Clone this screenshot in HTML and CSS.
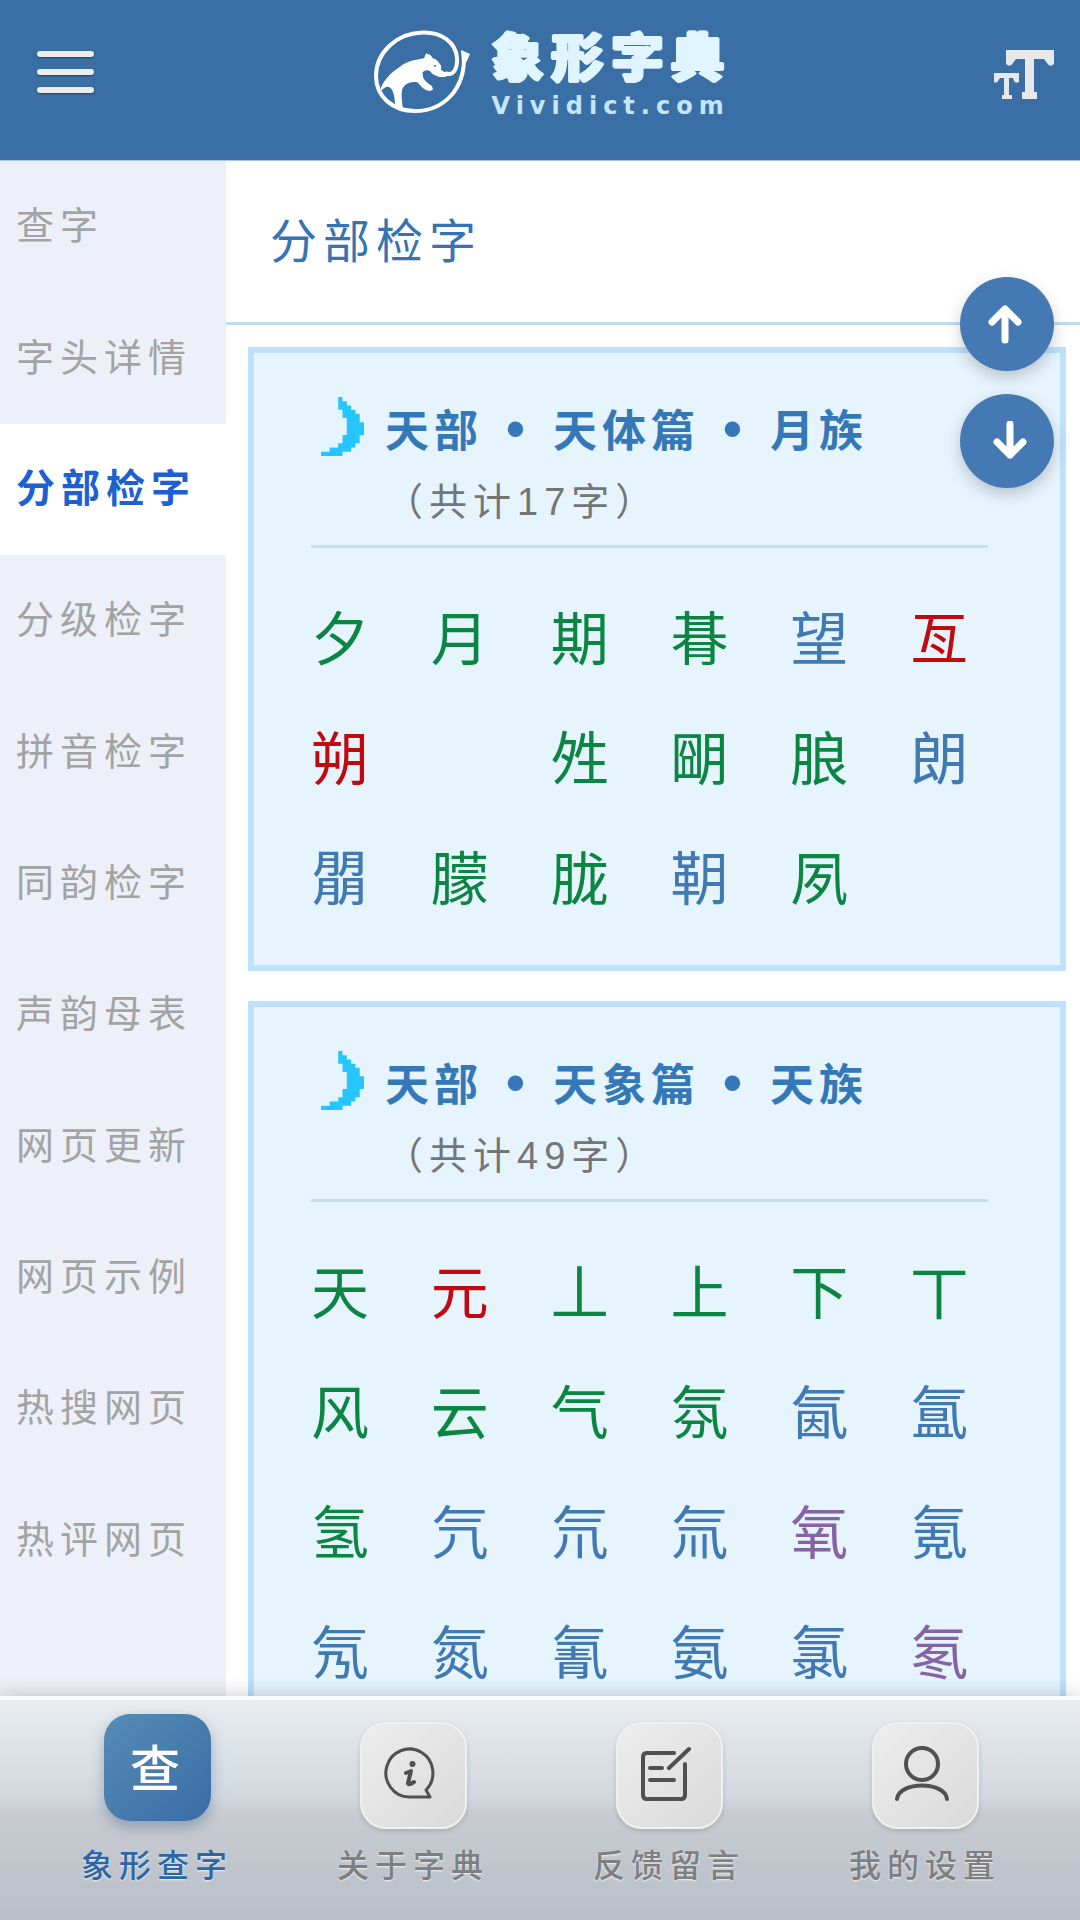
FILE: index.html
```html
<!DOCTYPE html>
<html lang="zh-CN">
<head>
    <meta charset="UTF-8">
    <meta name="viewport" content="width=device-width, initial-scale=1.0">
    <title>象形字典</title>
    <link rel="stylesheet" href="styles.css">
</head>
<body>
    <header class="header">
        <button class="menu-btn" type="button" aria-label="菜单">
            <span></span>
            <span></span>
            <span></span>
        </button>
        <a class="logo" href="#">
            <svg class="logo-icon" viewBox="0 0 98 84" aria-hidden="true">
                <path d="M72 43 C81 47 84.500 38 84 28 C83 12 68 2 50 2.500 C24 3 3 22 3 46 C3 67 20 81 42 81 C70 81 92 60 91 26" fill="none" stroke="#fff" stroke-width="4"/>
                <path d="M88 20 L97 24 L93 33 L89 33 Z" fill="#fff"/>
                <path d="M22 77 L30 79 C29 72 28 66 29 60 C31 54 37 51 44.400 52.300 L50 58.300 Q56 63 60 59.500 L59 56 Q52 52 50 47.300 L49.500 42.300 Q53 39 57 41 C60 46 69 49 75 45.700 L74 42.300 Q69 42 67.800 39 Q69 36 66.800 34 Q64 29 59.500 28 Q58 24 53 23.500 L51 28.300 C43 30 34 31 28 36 C17 43 9 52 7 61 L13 57 Q17 56 19.500 60.700 C22 66 22 72 22 77 Z" fill="#fff"/>
                <circle cx="62" cy="36" r="1" fill="#3a6fa6"/>
            </svg>
            <span class="logo-text">
                <span class="logo-name">象形字典</span>
                <span class="logo-site">Vividict.com</span>
            </span>
        </a>
        <button class="size-btn" type="button" aria-label="字体大小">
            <svg width="62" height="50" viewBox="0 0 62 50" fill="#e6e8ec" aria-hidden="true">
                <path d="M13 0 H61 V14 Q57 18 54 13 L51 9 H41 V42 H44 V49 H29 V42 H32 V9 H23 L20 13 Q17 18 13 14 Z"/>
                <path d="M1 23 H26 V32 Q23 34 21 31 L20 28 H16 V45 H19 V49 H9 V45 H11 V28 H7 L5 31 Q3 34 1 32 Z"/>
            </svg>
        </button>
    </header>

    <div class="content">
        <nav class="sidebar">
            <a href="#">查字</a>
            <a href="#">字头详情</a>
            <a href="#" class="active">分部检字</a>
            <a href="#">分级检字</a>
            <a href="#">拼音检字</a>
            <a href="#">同韵检字</a>
            <a href="#">声韵母表</a>
            <a href="#">网页更新</a>
            <a href="#">网页示例</a>
            <a href="#">热搜网页</a>
            <a href="#">热评网页</a>
        </nav>

        <main class="main">
            <h1 class="page-title">分部检字</h1>

            <section class="card">
                <div class="card-head">
                    <svg class="moon" width="43" height="59" viewBox="0 0 10 14" preserveAspectRatio="none" aria-hidden="true">
                        <path d="M4 0h1v1h1v1h1v1h1v1h1v2h1v3h-1v2h-1v1h-1v1h-2v1h-5v-1h2v-1h2v-1h1v-2h1v-4h-1v-2h-1v-3h-1z" fill="#27c5ff"/>
                    </svg>
                    <div>
                        <h2 class="card-title">天部<i class="dot">•</i>天体篇<i class="dot">•</i>月族</h2>
                        <p class="card-count">（共计17字）</p>
                    </div>
                </div>
                <div class="chars">
                    <a href="#" class="green">夕</a>
                    <a href="#" class="green">月</a>
                    <a href="#" class="green">期</a>
                    <a href="#" class="green">朞</a>
                    <a href="#">望</a>
                    <a href="#" class="red">亙</a>
                    <a href="#" class="red">朔</a>
                    <span></span>
                    <a href="#" class="green">夝</a>
                    <a href="#" class="green">朙</a>
                    <a href="#" class="green">朖</a>
                    <a href="#">朗</a>
                    <a href="#">朤</a>
                    <a href="#" class="green">朦</a>
                    <a href="#" class="green">胧</a>
                    <a href="#">䩗</a>
                    <a href="#" class="green">夙</a>
                </div>
            </section>

            <section class="card">
                <div class="card-head">
                    <svg class="moon" width="43" height="59" viewBox="0 0 10 14" preserveAspectRatio="none" aria-hidden="true">
                        <path d="M4 0h1v1h1v1h1v1h1v1h1v2h1v3h-1v2h-1v1h-1v1h-2v1h-5v-1h2v-1h2v-1h1v-2h1v-4h-1v-2h-1v-3h-1z" fill="#27c5ff"/>
                    </svg>
                    <div>
                        <h2 class="card-title">天部<i class="dot">•</i>天象篇<i class="dot">•</i>天族</h2>
                        <p class="card-count">（共计49字）</p>
                    </div>
                </div>
                <div class="chars">
                    <a href="#" class="green">天</a>
                    <a href="#" class="red">元</a>
                    <a href="#" class="green">丄</a>
                    <a href="#" class="green">上</a>
                    <a href="#" class="green">下</a>
                    <a href="#" class="green">丅</a>
                    <a href="#" class="green">风</a>
                    <a href="#" class="green">云</a>
                    <a href="#" class="green">气</a>
                    <a href="#" class="green">氛</a>
                    <a href="#">氤</a>
                    <a href="#">氲</a>
                    <a href="#" class="green">氢</a>
                    <a href="#">氕</a>
                    <a href="#">氘</a>
                    <a href="#">氚</a>
                    <a href="#" class="purple">氧</a>
                    <a href="#">氪</a>
                    <a href="#">氖</a>
                    <a href="#">氮</a>
                    <a href="#">氰</a>
                    <a href="#">氨</a>
                    <a href="#">氯</a>
                    <a href="#" class="purple">氡</a>
                </div>
            </section>
        </main>
    </div>

    <!-- 上下滚动按钮 -->
    <div class="scroll-btns">
        <button type="button" aria-label="向上">
            <svg width="40" height="40" viewBox="0 0 40 40" aria-hidden="true">
                <path d="M18 36V5M5 18L18 5L31 18"/>
            </svg>
        </button>
        <button type="button" aria-label="向下">
            <svg width="40" height="40" viewBox="0 0 40 40" aria-hidden="true">
                <path d="M23 3V34M10 21L23 34L36 21"/>
            </svg>
        </button>
    </div>

    <nav class="tabbar">
        <a href="#" class="tab active">
            <span class="tab-icon">查</span>
            <span class="tab-label">象形查字</span>
        </a>
        <a href="#" class="tab">
            <span class="tab-icon">
                <svg width="56" height="56" viewBox="0 0 56 56" aria-hidden="true">
                    <path d="M47 51H26A23.500 24 0 1 1 43 44Z" class="thin"/>
                    <circle cx="29.500" cy="18" r="3" class="fill"/>
                    <path d="M23 27L28 25L25 37Q25 40 31 36"/>
                </svg>
            </span>
            <span class="tab-label">关于字典</span>
        </a>
        <a href="#" class="tab">
            <span class="tab-icon">
                <svg width="56" height="56" viewBox="0 0 56 56" aria-hidden="true">
                    <path d="M35 7H8Q4 7 4 11V49Q4 53 8 53H42Q46 53 46 49V18M11 22H23M11 34H35M30 22L50 3"/>
                </svg>
            </span>
            <span class="tab-label">反馈留言</span>
        </a>
        <a href="#" class="tab">
            <span class="tab-icon">
                <svg width="56" height="56" viewBox="0 0 56 56" aria-hidden="true">
                    <circle cx="27" cy="18" r="16"/>
                    <path d="M2 53C4 35 50 35 52 53"/>
                </svg>
            </span>
            <span class="tab-label">我的设置</span>
        </a>
    </nav>
</body>
</html>
```
FILE: styles.css
```css
* {
    box-sizing: border-box;
}

body {
    margin: 0;
    height: 100vh;
    display: flex;
    flex-direction: column;
    overflow: hidden;
    background: #fff;
    font-family: "Liberation Sans", "Noto Sans CJK SC", sans-serif;
    letter-spacing: 6px;
}

a {
    text-decoration: none;
    color: inherit;
}

button {
    border: none;
    padding: 0;
    background: none;
    cursor: pointer;
}

/* 顶部 */
.header {
    flex: none;
    height: 161px;
    padding: 0 25px 16px 37px;
    display: flex;
    align-items: center;
    justify-content: space-between;
    background: #3a6fa6;
    border-bottom: 1px solid #a9c4e4;
}

.menu-btn {
    width: 57px;
    display: flex;
    flex-direction: column;
    gap: 12px;
}

.menu-btn span {
    height: 6px;
    border-radius: 3px;
    background: #eceded;
    box-shadow: 0 1px 2px rgba(0, 0, 0, 0.4);
}

.logo {
    display: flex;
    align-items: center;
    gap: 20px;
    margin-left: 18px;
}

.logo-icon {
    width: 98px;
    height: 84px;
}

.logo-text {
    display: flex;
    flex-direction: column;
    gap: 4px;
    padding-top: 8px;
}

.logo-name {
    font-size: 52px;
    line-height: 56px;
    font-weight: 900;
    letter-spacing: 8px;
    color: #e0f5ff;
    text-shadow: 2px 0 #e0f5ff, -2px 0 #e0f5ff, 0 1px #e0f5ff, 0 -1px #e0f5ff,
        1px 1px #e0f5ff, -1px 1px #e0f5ff, 1px -1px #e0f5ff, -1px -1px #e0f5ff;
}

.logo-site {
    font-family: "DejaVu Sans", sans-serif;
    font-size: 24px;
    line-height: 30px;
    font-weight: bold;
    letter-spacing: 6px;
    color: #c5e6ff;
}

.size-btn {
    padding-top: 5px;
}

.size-btn svg {
    display: block;
}

/* 中间内容 */
.content {
    flex: 1;
    min-height: 0;
    display: flex;
    overflow: hidden;
}

.sidebar {
    flex: none;
    width: 226px;
    padding-bottom: 90px;
    display: flex;
    flex-direction: column;
    background: #edf0f8;
}

.sidebar a {
    flex: 1;
    display: flex;
    align-items: center;
    padding: 0 0 8px 16px;
    font-size: 38px;
    color: #a3a3a3;
}

.sidebar a.active {
    background: #fff;
    color: #1d60d2;
    font-size: 39px;
    font-weight: bold;
}

.main {
    flex: 1;
    min-width: 0;
}

.page-title {
    margin: 0 0 22px;
    padding: 0 44px;
    font-size: 47px;
    line-height: 161px;
    font-weight: normal;
    color: #3673b3;
    border-bottom: 3px solid #bfdcee;
}

.card {
    margin: 0 14px 30px 22px;
    padding: 44px 60px 25px 57px;
    background: #e6f4fe;
    border: 6px solid #bde1fe;
}

.card-head {
    display: flex;
    gap: 21px;
    margin: 0 12px 32px 0;
    padding-left: 10px;
    border-bottom: 3px solid #c5dfef;
}

.moon {
    flex: none;
}

.card-title {
    margin: 0;
    font-size: 44px;
    line-height: 70px;
    font-weight: bold;
    letter-spacing: 5px;
    color: #3578b8;
}

.dot {
    display: inline-block;
    width: 70px;
    font-size: 54px;
    line-height: 54px;
    text-align: center;
    font-style: normal;
}

.card-count {
    margin: 0;
    padding-bottom: 8px;
    font-size: 38px;
    line-height: 70px;
    color: #757575;
}

.chars {
    display: grid;
    grid-template-columns: repeat(auto-fill, minmax(110px, 1fr));
    margin-right: -30px;
}

.chars a {
    font-size: 58px;
    line-height: 120px;
    color: #4179b3;
}

.chars .green {
    color: #0b8542;
}

.chars .red {
    color: #bf0a10;
}

.chars .purple {
    color: #8564a3;
}

/* 浮动按钮 */
.scroll-btns {
    position: fixed;
    top: 277px;
    right: 26px;
    display: flex;
    flex-direction: column;
    gap: 23px;
}

.scroll-btns button {
    width: 94px;
    height: 94px;
    border-radius: 50%;
    display: flex;
    align-items: center;
    justify-content: center;
    background: #4479b4;
    box-shadow: 0 6px 16px rgba(0, 0, 0, 0.2);
}

.scroll-btns svg {
    fill: none;
    stroke: #fff;
    stroke-width: 7;
    stroke-linecap: round;
    stroke-linejoin: round;
}

/* 底部导航 */
.tabbar {
    flex: none;
    position: relative;
    height: 224px;
    padding: 22px 27px 0 29px;
    display: flex;
    border-top: 4px solid #fbfcfc;
    background: linear-gradient(#e9edf0, #d2d7df 45%, #c8cbd1 52%, #b9bfc9);
    box-shadow: 0 -2px 18px rgba(0, 0, 0, 0.18);
}

.tab {
    flex: 1;
    display: flex;
    flex-direction: column;
    align-items: center;
    gap: 12px;
    color: #7d7f82;
}

.tab-icon {
    width: 107px;
    height: 107px;
    display: flex;
    align-items: center;
    justify-content: center;
    border-radius: 26px;
    border: 2px solid #f0f0f0;
    background: linear-gradient(135deg, #ededed, #dadada);
    box-shadow: 0 2px 5px rgba(0, 0, 0, 0.15);
}

.tab-icon svg {
    margin: 0 4px 4px 0;
    fill: none;
    stroke: #505050;
    stroke-width: 4;
    stroke-linecap: round;
    stroke-linejoin: round;
}

.tab-icon .thin {
    stroke-width: 3;
}

.tab-icon .fill {
    fill: #505050;
    stroke: none;
}

.tab-label {
    font-size: 32px;
    line-height: 50px;
    font-weight: 500;
    text-shadow: 0 1px 2px rgba(255, 255, 255, 0.8);
}

.tab.active {
    color: #2c66a6;
}

.tab.active .tab-icon {
    margin: -8px 0 8px;
    padding: 0 4px 6px 0;
    border: none;
    background: linear-gradient(135deg, #568cb5, #3a6ca6);
    box-shadow: 0 6px 14px rgba(40, 80, 130, 0.35);
    color: #fff;
    font-size: 50px;
    font-weight: 500;
    letter-spacing: 0;
}
```
